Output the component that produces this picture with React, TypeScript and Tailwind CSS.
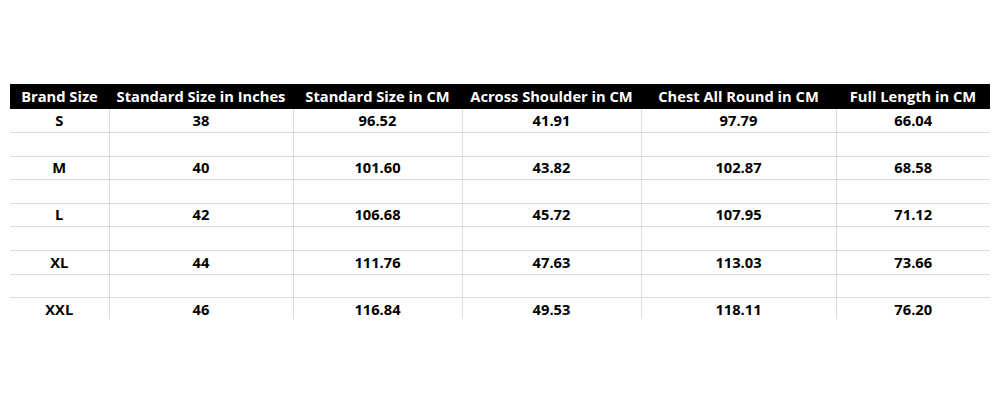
const HEADERS = [
  "Brand Size",
  "Standard Size in Inches",
  "Standard Size in CM",
  "Across Shoulder in CM",
  "Chest All Round in CM",
  "Full Length in CM",
];

const WIDTHS = ["w-[99px]", "w-[184px]", "w-[169px]", "w-[179px]", "w-[195px]", "w-[154px]"];

const SIZES = [
  ["S", "38", "96.52", "41.91", "97.79", "66.04"],
  ["M", "40", "101.60", "43.82", "102.87", "68.58"],
  ["L", "42", "106.68", "45.72", "107.95", "71.12"],
  ["XL", "44", "111.76", "47.63", "113.03", "73.66"],
  ["XXL", "46", "116.84", "49.53", "118.11", "76.20"],
];

// data rows with a blank spacer row after each one except the last
const rows = SIZES.flatMap((row, index) =>
  index < SIZES.length - 1 ? [row, ["", "", "", "", "", ""]] : [row]
);

export default function App() {
  return (
    <div className="h-[400px] w-[1000px] bg-white pl-[10px] pt-[84px] font-['Open_Sans',sans-serif]">
      <div className="h-[235px] overflow-hidden">
        <table className="table-fixed border-collapse text-[14.7px] font-bold">
          <thead>
            <tr className="h-[25px] bg-black text-white">
              {HEADERS.map((label, index) => (
                <th key={label} className={`${WIDTHS[index]} p-0 text-center font-bold leading-none whitespace-nowrap`}>
                  {label}
                </th>
              ))}
            </tr>
          </thead>
          <tbody>
            {rows.map((row, rowIndex) => (
              <tr
                key={rowIndex}
                className={`h-[23.6px] text-black ${
                  rowIndex < rows.length - 1 ? "border-b border-[#dcdcdc]" : ""
                }`}
              >
                {row.map((cell, cellIndex) => (
                  <td
                    key={cellIndex}
                    className={`p-0 pb-[1px] text-center leading-none ${
                      cellIndex < row.length - 1 ? "border-r border-[#dcdcdc]" : ""
                    }`}
                  >
                    {cell}
                  </td>
                ))}
              </tr>
            ))}
          </tbody>
        </table>
      </div>
    </div>
  );
}
